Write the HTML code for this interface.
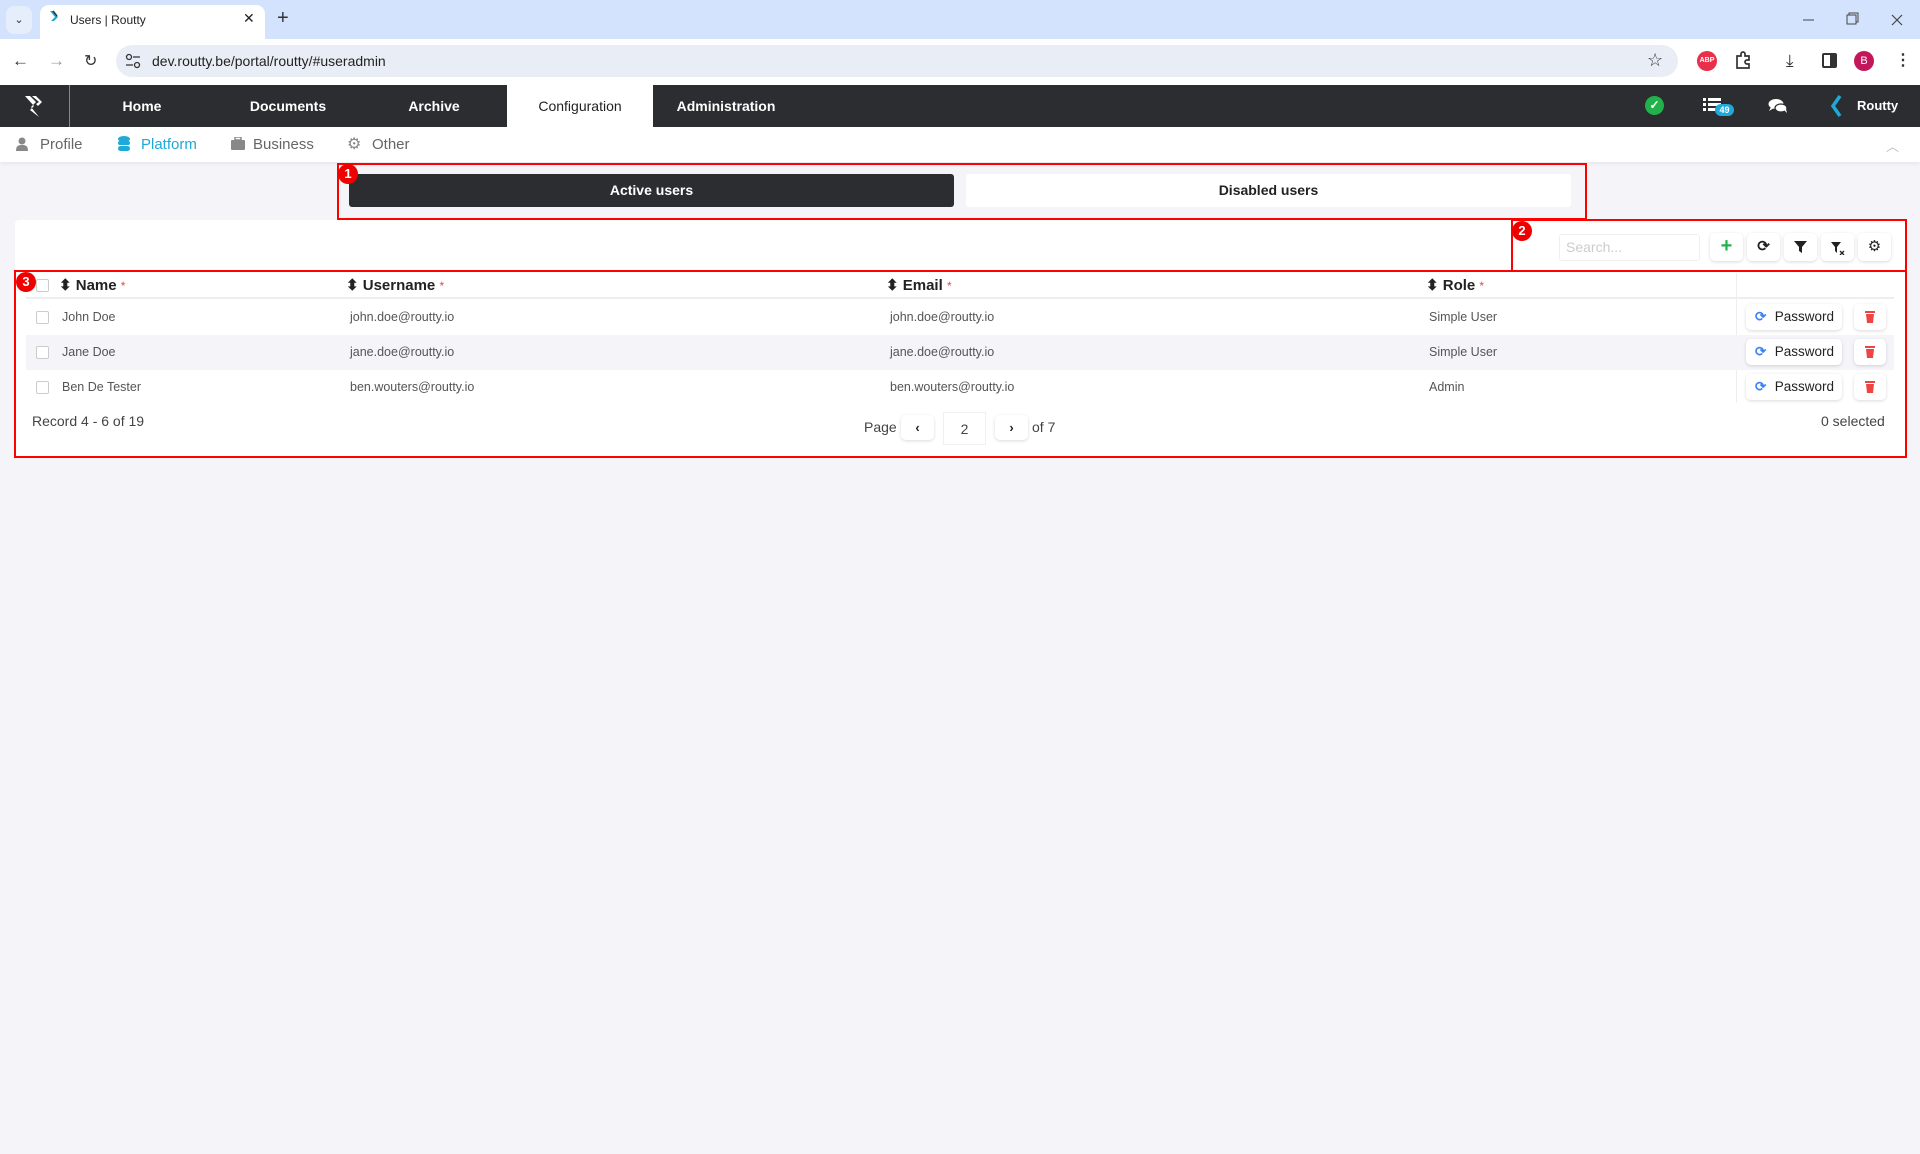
<!DOCTYPE html>
<html><head><meta charset="utf-8">
<style>
*{margin:0;padding:0;box-sizing:border-box}
body{width:1920px;height:1154px;background:#f5f5f9;font-family:"Liberation Sans",sans-serif;position:relative;overflow:hidden;color:#333}
.a{position:absolute}
.tabbar{left:0;top:0;width:1920px;height:39px;background:#d3e3fd}
.tab{left:40px;top:5px;width:225px;height:34px;background:#fff;border-radius:9px 9px 0 0}
.addr{left:0;top:39px;width:1920px;height:46px;background:#fff}
.omni{left:116px;top:45px;width:1562px;height:32px;background:#e9eef6;border-radius:16px}
.nav{left:0;top:85px;width:1920px;height:42px;background:#2b2d30}
.ni{top:85px;height:42px;width:146px;color:#fff;font-weight:bold;font-size:14px;text-align:center;line-height:42px}
.sub{left:0;top:127px;width:1920px;height:35px;background:#fff;box-shadow:0 2px 4px rgba(0,0,0,.06)}
.si{top:127px;line-height:35px;font-size:15px;color:#666}
.red{border:2px solid #f00}
.badge{width:20px;height:20px;border-radius:50%;background:#e00;color:#fff;font-weight:bold;font-size:13px;text-align:center;line-height:20px}
.card{left:15px;top:220px;width:1892px;height:237px;background:#fff;border-radius:4px}
.th{top:276px;font-size:15px;font-weight:bold;color:#222;line-height:20px}
.th i{color:#e44;font-style:normal;font-weight:normal;font-size:12px;vertical-align:top}
.td{font-size:12.5px;color:#555;line-height:16px}
.cb{width:13px;height:13px;border:1px solid #ccc;border-radius:2px;background:#fff}
.btn{background:#fff;border-radius:5px;box-shadow:0 1px 3px rgba(0,0,0,.15)}
.pw{width:96px;height:26px;font-size:13.5px;color:#222;line-height:26px;text-align:right;padding-right:8px}
</style></head><body>
<div class="a tabbar"></div>
<div class="a" style="left:6px;top:6px;width:26px;height:28px;background:#e6eefb;border-radius:8px;font-size:11px;text-align:center;line-height:28px;color:#333">⌄</div>
<div class="a tab"></div>
<svg class="a" style="left:48px;top:10px" width="14" height="16"><path d="M2 1l5 6-4 4 3 0 4-4-4-6z" fill="#1aa7d8"/><path d="M5 1l4 5" stroke="#333" stroke-width="1.5"/></svg>
<div class="a" style="left:70px;top:13px;font-size:12px;color:#222">Users | Routty</div>
<div class="a" style="left:243px;top:10px;font-size:14px;color:#222">✕</div>
<div class="a" style="left:277px;top:7px;font-size:20px;color:#333">+</div>
<svg class="a" style="left:1800px;top:12px" width="110" height="16"><path d="M3 8h11" stroke="#444"/><rect x="47" y="3" width="9" height="9" fill="none" stroke="#444"/><path d="M49 3V1h9v9h-2" fill="none" stroke="#444"/><path d="M92 3l10 10M102 3L92 13" stroke="#444" stroke-width="1.2"/></svg>
<div class="a addr"></div>
<div class="a" style="left:12px;top:51px;font-size:17px;color:#333">←</div>
<div class="a" style="left:48px;top:51px;font-size:17px;color:#999">→</div>
<div class="a" style="left:84px;top:51px;font-size:16px;color:#333">↻</div>
<div class="a omni"></div>
<svg class="a" style="left:125px;top:53px" width="16" height="16"><circle cx="4" cy="4" r="2.5" fill="none" stroke="#333" stroke-width="1.3"/><path d="M8 4h7M1 12h7" stroke="#333" stroke-width="1.3"/><circle cx="12" cy="12" r="2.5" fill="none" stroke="#333" stroke-width="1.3"/></svg>
<div class="a" style="left:152px;top:53px;font-size:14px;color:#222">dev.routty.be/portal/routty/#useradmin</div>
<div class="a" style="left:1647px;top:50px;font-size:18px;color:#333">☆</div>
<div class="a" style="left:1697px;top:51px;width:20px;height:20px;border-radius:50%;background:#e8304a;color:#fff;font-size:7px;font-weight:bold;text-align:center;line-height:20px">ABP</div>
<svg class="a" style="left:1734px;top:51px" width="18" height="18"><path d="M3 5h4V3a2 2 0 014 0v2h4v4h-2a2 2 0 000 4h2v4H3z" fill="none" stroke="#333" stroke-width="1.7"/></svg>
<div class="a" style="left:1786px;top:51px;font-size:17px;color:#333">⤓</div>
<div class="a" style="left:1822px;top:53px;width:15px;height:15px;border:2px solid #333;border-right-width:7px;border-radius:2px"></div>
<div class="a" style="left:1854px;top:51px;width:20px;height:20px;border-radius:50%;background:#c2185b;color:#fff;font-size:11px;text-align:center;line-height:20px">B</div>
<div class="a" style="left:1895px;top:50px;font-size:16px;color:#333;font-weight:bold">⋮</div>

<div class="a nav"></div>
<div class="a" style="left:69px;top:85px;width:1px;height:42px;background:#888"></div>
<svg class="a" style="left:23px;top:94px" width="24" height="26"><path d="M2 2h5l6 6-5 5 8 10-9-7 4-4z M9 2h4l6 6-4 4-2-2 3-2z" fill="#fff"/></svg>
<div class="a ni" style="left:69px">Home</div>
<div class="a ni" style="left:215px">Documents</div>
<div class="a ni" style="left:361px">Archive</div>
<div class="a ni" style="left:507px;background:#fff;color:#222;font-weight:normal">Configuration</div>
<div class="a ni" style="left:653px">Administration</div>
<div class="a" style="left:1645px;top:96px;width:19px;height:19px;border-radius:50%;background:#22b24c;color:#fff;font-size:12px;text-align:center;line-height:19px;font-weight:bold">✓</div>
<svg class="a" style="left:1703px;top:98px" width="18" height="14"><g fill="#fff"><rect x="0" y="0" width="3" height="3"/><rect x="5" y="0" width="13" height="3"/><rect x="0" y="5" width="3" height="3"/><rect x="5" y="5" width="13" height="3"/><rect x="0" y="10" width="3" height="3"/><rect x="5" y="10" width="13" height="3"/></g></svg>
<div class="a" style="left:1715px;top:104px;width:19px;height:12px;border-radius:6px;background:#1ea9d8;color:#fff;font-size:9px;font-weight:bold;text-align:center;line-height:12px">49</div>
<svg class="a" style="left:1768px;top:98px" width="20" height="16"><ellipse cx="8" cy="6" rx="7.5" ry="5" fill="#fff"/><path d="M3 9l-2 4 5-3z" fill="#fff"/><ellipse cx="13" cy="10" rx="6" ry="4" fill="#fff" stroke="#2b2d30" stroke-width="1.2"/><path d="M16 12l3 3-1-4z" fill="#fff"/></svg>
<svg class="a" style="left:1830px;top:95px" width="14" height="22"><path d="M10 1L3 11l7 10" stroke="#1ea9d8" stroke-width="3.5" fill="none"/></svg>
<div class="a" style="left:1857px;top:98px;font-size:13px;font-weight:bold;color:#fff">Routty</div>

<div class="a sub"></div>
<svg class="a" style="left:16px;top:137px" width="12" height="14"><circle cx="6" cy="4" r="3.5" fill="#888"/><path d="M0 14c0-5 2-6 6-6s6 1 6 6z" fill="#888"/></svg>
<div class="a si" style="left:40px">Profile</div>
<svg class="a" style="left:118px;top:136px" width="12" height="16"><g fill="#1ea9d8"><ellipse cx="6" cy="3" rx="6" ry="3"/><rect x="0" y="5" width="12" height="4" rx="2"/><rect x="0" y="10" width="12" height="5" rx="2.5"/></g></svg>
<div class="a si" style="left:141px;color:#1ea9d8">Platform</div>
<svg class="a" style="left:231px;top:137px" width="14" height="13"><rect x="4" y="0" width="6" height="3" fill="none" stroke="#888" stroke-width="1.5"/><rect x="0" y="3" width="14" height="10" rx="1" fill="#888"/></svg>
<div class="a si" style="left:253px">Business</div>
<div class="a" style="left:347px;top:134px;font-size:16px;color:#888">⚙</div>
<div class="a si" style="left:372px">Other</div>
<div class="a" style="left:1886px;top:136px;font-size:13px;color:#bbb">︿</div>

<div class="a red" style="left:337px;top:163px;width:1250px;height:57px"></div>
<div class="a" style="left:349px;top:174px;width:605px;height:33px;background:#2b2d30;border-radius:3px;color:#fff;font-weight:bold;font-size:14px;text-align:center;line-height:33px">Active users</div>
<div class="a" style="left:966px;top:174px;width:605px;height:33px;background:#fff;border-radius:3px;color:#222;font-weight:bold;font-size:14px;text-align:center;line-height:33px">Disabled users</div>
<div class="a badge" style="left:338px;top:164px">1</div>

<div class="a card"></div>
<div class="a red" style="left:1511px;top:219px;width:396px;height:53px"></div>
<div class="a red" style="left:14px;top:270px;width:1893px;height:188px"></div>
<div class="a badge" style="left:1512px;top:221px">2</div>
<div class="a badge" style="left:16px;top:272px">3</div>
<div class="a" style="left:1559px;top:234px;width:141px;height:27px;border:1px solid #eee;border-radius:3px;font-size:14px;color:#ccc;padding-left:6px;line-height:25px">Search...</div>
<div class="a btn" style="left:1710px;top:233px;width:33px;height:28px;color:#22b24c;font-size:20px;font-weight:bold;text-align:center;line-height:27px">+</div>
<div class="a btn" style="left:1747px;top:233px;width:33px;height:28px;color:#222;font-size:15px;font-weight:bold;text-align:center;line-height:28px">⟳</div>
<div class="a btn" style="left:1784px;top:233px;width:33px;height:28px"><svg style="margin:8px 0 0 10px" width="13" height="12"><path d="M0 0h13L8 6v6L5 10V6z" fill="#222"/></svg></div>
<div class="a btn" style="left:1821px;top:233px;width:33px;height:28px"><svg style="margin:9px 0 0 10px" width="14" height="13"><path d="M0 0h10L6 5v6L4 9V5z" fill="#222"/><path d="M9 9l4 4M13 9l-4 4" stroke="#222" stroke-width="1.3"/></svg></div>
<div class="a btn" style="left:1858px;top:233px;width:33px;height:28px;color:#222;font-size:15px;text-align:center;line-height:28px">⚙</div>

<div class="a cb" style="left:36px;top:279px"></div>
<div class="a th" style="left:59px">⬍ Name <i>*</i></div>
<div class="a th" style="left:346px">⬍ Username <i>*</i></div>
<div class="a th" style="left:886px">⬍ Email <i>*</i></div>
<div class="a th" style="left:1426px">⬍ Role <i>*</i></div>
<div class="a" style="left:1736px;top:273px;width:1px;height:130px;background:#eee"></div>
<div class="a" style="left:26px;top:297px;width:1868px;height:2px;background:#eee"></div>
<div class="a" style="left:26px;top:335px;width:1868px;height:35px;background:#f5f5f9"></div>

<div class="a cb" style="left:36px;top:311px"></div>
<div class="a td" style="left:62px;top:309px">John Doe</div>
<div class="a td" style="left:350px;top:309px">john.doe@routty.io</div>
<div class="a td" style="left:890px;top:309px">john.doe@routty.io</div>
<div class="a td" style="left:1429px;top:309px">Simple User</div>
<div class="a cb" style="left:36px;top:346px"></div>
<div class="a td" style="left:62px;top:344px">Jane Doe</div>
<div class="a td" style="left:350px;top:344px">jane.doe@routty.io</div>
<div class="a td" style="left:890px;top:344px">jane.doe@routty.io</div>
<div class="a td" style="left:1429px;top:344px">Simple User</div>
<div class="a cb" style="left:36px;top:381px"></div>
<div class="a td" style="left:62px;top:379px">Ben De Tester</div>
<div class="a td" style="left:350px;top:379px">ben.wouters@routty.io</div>
<div class="a td" style="left:890px;top:379px">ben.wouters@routty.io</div>
<div class="a td" style="left:1429px;top:379px">Admin</div>

<div class="a btn pw" style="left:1746px;top:304px"><span style="color:#3b82f6;font-weight:bold;float:left;margin-left:9px">⟳</span>Password</div>
<div class="a btn pw" style="left:1746px;top:339px"><span style="color:#3b82f6;font-weight:bold;float:left;margin-left:9px">⟳</span>Password</div>
<div class="a btn pw" style="left:1746px;top:374px"><span style="color:#3b82f6;font-weight:bold;float:left;margin-left:9px">⟳</span>Password</div>
<div class="a btn" style="left:1854px;top:304px;width:32px;height:26px"><svg style="margin:7px 0 0 11px" width="10" height="12"><rect x="0" y="0" width="10" height="2" fill="#ef4444"/><path d="M1 3h8l-1 9H2z" fill="#ef4444"/></svg></div>
<div class="a btn" style="left:1854px;top:339px;width:32px;height:26px"><svg style="margin:7px 0 0 11px" width="10" height="12"><rect x="0" y="0" width="10" height="2" fill="#ef4444"/><path d="M1 3h8l-1 9H2z" fill="#ef4444"/></svg></div>
<div class="a btn" style="left:1854px;top:374px;width:32px;height:26px"><svg style="margin:7px 0 0 11px" width="10" height="12"><rect x="0" y="0" width="10" height="2" fill="#ef4444"/><path d="M1 3h8l-1 9H2z" fill="#ef4444"/></svg></div>

<div class="a" style="left:32px;top:413px;font-size:14px;color:#444">Record 4 - 6 of 19</div>
<div class="a" style="left:864px;top:419px;font-size:14px;color:#444">Page</div>
<div class="a btn" style="left:901px;top:415px;width:33px;height:25px;text-align:center;line-height:25px;font-size:13px;font-weight:bold;color:#222">‹</div>
<div class="a" style="left:943px;top:412px;width:43px;height:33px;border:1px solid #f0f0f0;text-align:center;line-height:33px;font-size:14px;color:#444">2</div>
<div class="a btn" style="left:995px;top:415px;width:33px;height:25px;text-align:center;line-height:25px;font-size:13px;font-weight:bold;color:#222">›</div>
<div class="a" style="left:1032px;top:419px;font-size:14px;color:#444">of 7</div>
<div class="a" style="left:1821px;top:413px;font-size:14px;color:#444">0 selected</div>
</body></html>
